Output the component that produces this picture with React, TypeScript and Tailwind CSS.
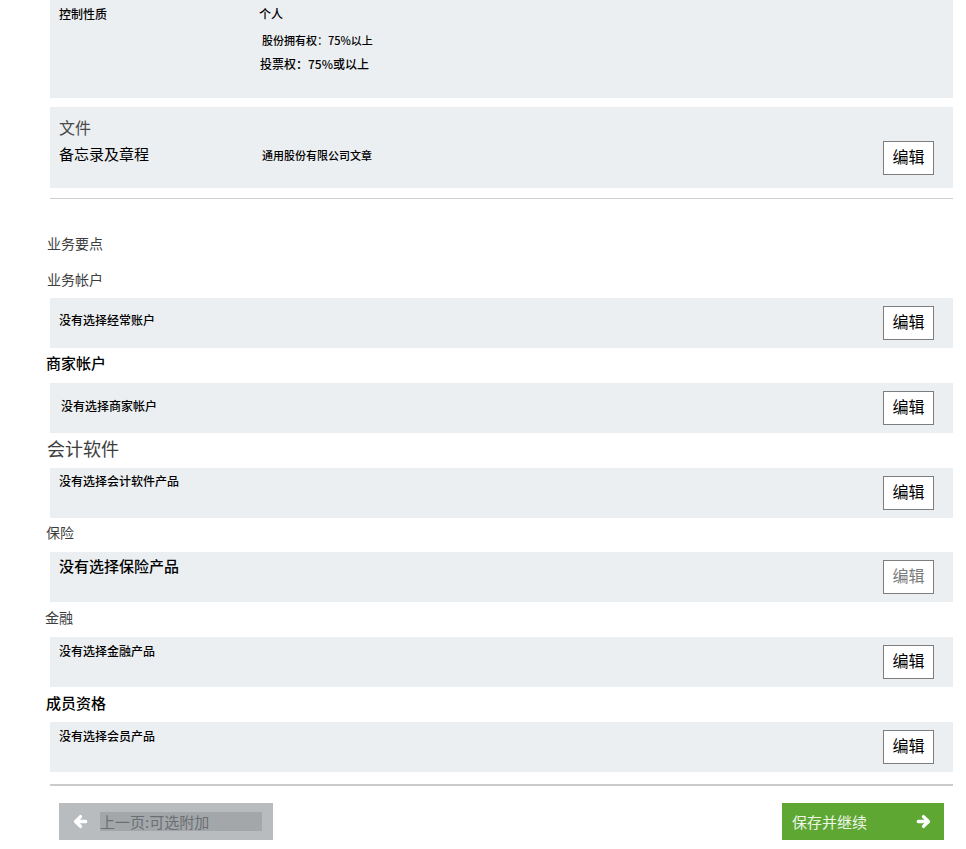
import React from 'react';

const font = { fontFamily: '"Noto Sans CJK SC", "Noto Sans", sans-serif' };

function Arrow({ dir }: { dir: 'left' | 'right' }) {
  return (
    <svg
      viewBox="0 0 16 16"
      className={`w-[15px] h-[15px] ${dir === 'left' ? 'rotate-180' : ''}`}
      fill="none"
      stroke="white"
      strokeWidth="3.6"
      strokeLinecap="round"
      strokeLinejoin="round"
    >
      <line x1="2.5" y1="8" x2="13" y2="8" />
      <polyline points="8,2.8 13.2,8 8,13.2" />
    </svg>
  );
}

function EditButton({ muted = false }: { muted?: boolean }) {
  return (
    <button
      className={`w-[51px] h-[34px] bg-white border border-[#7d7d7d] text-[16px] leading-none flex items-center justify-center pb-[5px] ${
        muted ? 'text-[#7a7a7a]' : 'text-black'
      }`}
    >
      编辑
    </button>
  );
}

interface SectionProps {
  title: string;
  titleClass: string;
  text: string;
  textClass: string;
  muted?: boolean;
}

function Section({ title, titleClass, text, textClass, muted }: SectionProps) {
  return (
    <div>
      <div className={titleClass}>{title}</div>
      <div className="h-[50px] bg-[#eceff2] ml-[3px] flex items-start justify-between pl-[9px] pr-[19px]">
        <div className={textClass}>{text}</div>
        <div className="pt-[8px]">
          <EditButton muted={muted} />
        </div>
      </div>
    </div>
  );
}

export default function App() {
  return (
    <div className="w-[966px] h-[849px] bg-white overflow-hidden" style={font}>
      <div className="pl-[50px] pr-[13px]">
        {/* control nature */}
        <div className="h-[98px] bg-[#eceff2] pl-[9px] pt-[5px] flex">
          <div className="w-[200px] text-[12px] leading-[18px] font-medium text-black">控制性质</div>
          <div className="text-[12px] font-medium text-black">
            <div className="leading-[18px]">个人</div>
            <div className="leading-[18px] mt-[8px] pl-[3px] text-[11px]">股份拥有权：75%以上</div>
            <div className="leading-[18px] mt-[6px] pl-[1px]">投票权：75%或以上</div>
          </div>
        </div>

        {/* documents */}
        <div className="h-[81px] bg-[#eceff2] mt-[9px] pl-[9px] pr-[19px] pt-[9px] flex">
          <div className="w-[203px]">
            <div className="text-[16px] leading-[22px] text-[#4a4a4a]">文件</div>
            <div className="text-[15px] leading-[22px] mt-[5px] text-black">备忘录及章程</div>
          </div>
          <div className="flex-1 text-[11px] leading-[18px] mt-[30px] font-medium text-black">通用股份有限公司文章</div>
          <div className="pt-[25px]">
            <EditButton />
          </div>
        </div>

        <div className="h-px bg-[#cfcfcf] mt-[10px]" />
      </div>

      <div className="pl-[47px] pr-[13px]">
        <div className="mt-[34px] text-[14px] leading-[20px] text-[#3d3d3d]">业务要点</div>

        <Section
          title="业务帐户"
          titleClass="mt-[16px] mb-[9px] text-[14px] leading-[20px] text-[#3d3d3d]"
          text="没有选择经常账户"
          textClass="text-[12px] leading-[18px] font-medium text-black pt-[13px]"
        />
        <Section
          title="商家帐户"
          titleClass="mt-[5px] mb-[10px] -ml-[1px] text-[15px] leading-[20px] font-medium text-black"
          text="没有选择商家帐户"
          textClass="text-[12px] leading-[18px] font-medium text-black pt-[14px] pl-[2px]"
        />
        <Section
          title="会计软件"
          titleClass="mt-[3px] mb-[8px] text-[18px] leading-[24px] text-[#3d3d3d]"
          text="没有选择会计软件产品"
          textClass="text-[12px] leading-[18px] font-medium text-black pt-[4px]"
        />
        <Section
          title="保险"
          titleClass="mt-[4px] mb-[10px] -ml-[1px] text-[14px] leading-[20px] text-[#3d3d3d]"
          text="没有选择保险产品"
          textClass="text-[15px] leading-[22px] font-medium text-black pt-[3px]"
          muted
        />
        <Section
          title="金融"
          titleClass="mt-[5px] mb-[10px] -ml-[2px] text-[14px] leading-[20px] text-[#3d3d3d]"
          text="没有选择金融产品"
          textClass="text-[12px] leading-[18px] font-medium text-black pt-[5px]"
        />
        <Section
          title="成员资格"
          titleClass="mt-[6px] mb-[9px] -ml-[1px] text-[15px] leading-[20px] font-medium text-black"
          text="没有选择会员产品"
          textClass="text-[12px] leading-[18px] font-medium text-black pt-[5px]"
        />
      </div>

      <div className="pl-[50px] pr-[13px]">
        <div className="h-[2px] bg-[#cbcbcb] mt-[12px]" />
        <div className="flex justify-between items-center mt-[17px] pl-[9px] pr-[9px]">
          <button className="w-[214px] h-[37px] bg-[#b9bcbf] flex items-center pl-[14px]">
            <Arrow dir="left" />
            <span className="ml-[12px] w-[162px] h-[19px] bg-[#a3a7aa] text-[15px] leading-[19px] text-[#6b6f73] text-left">
              上一页:可选附加
            </span>
          </button>
          <button className="w-[162px] h-[37px] bg-[#5ea733] flex items-center justify-between pl-[10px] pr-[13px]">
            <span className="text-[15px] leading-[20px] text-[#eef6e8]">保存并继续</span>
            <Arrow dir="right" />
          </button>
        </div>
      </div>
    </div>
  );
}
